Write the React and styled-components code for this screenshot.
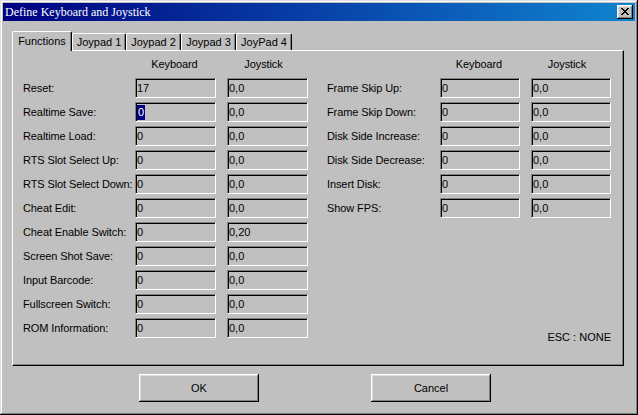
import React from "react";
import styled, { createGlobalStyle } from "styled-components";

const GlobalStyle = createGlobalStyle`
  html, body {
    margin: 0;
    padding: 0;
    background: #c0c0c0;
  }
  body {
    font-family: "Liberation Sans", Arial, sans-serif;
    font-size: 11px;
    color: #000;
  }
`;

const Window = styled.div`
  width: 638px;
  height: 415px;
  box-sizing: border-box;
  padding: 3px;
  background: #c0c0c0;
  box-shadow: inset -1px -1px #000, inset 1px 1px #dfdfdf,
    inset -2px -2px #808080, inset 2px 2px #fff;
  display: flex;
  flex-direction: column;
`;

const TitleBar = styled.div`
  height: 18px;
  display: flex;
  align-items: center;
  justify-content: space-between;
  padding: 0 2px;
  background: linear-gradient(to right, #000080, #1084d0);
`;

const TitleText = styled.span`
  font-family: "Liberation Serif", "Times New Roman", serif;
  font-size: 12px;
  line-height: 18px;
  color: #fff;
`;

const CloseButton = styled.div`
  width: 16px;
  height: 14px;
  box-sizing: border-box;
  background: #c0c0c0;
  box-shadow: inset -1px -1px #000, inset 1px 1px #fff,
    inset -2px -2px #808080, inset 2px 2px #dfdfdf;
  display: flex;
  align-items: center;
  justify-content: center;
  padding-bottom: 1px;
`;

const Body = styled.div`
  flex: 1;
  display: flex;
  flex-direction: column;
  padding: 10px 0 0 9px;
`;

const TabRow = styled.div`
  display: flex;
  align-items: flex-end;
  height: 19px;
`;

const Tab = styled.div`
  box-sizing: border-box;
  width: ${(p) => p.$w}px;
  height: ${(p) => (p.$active ? 20 : 17)}px;
  margin-bottom: ${(p) => (p.$active ? -1 : 0)}px;
  padding-bottom: ${(p) => (p.$active ? 1 : 0)}px;
  position: relative;
  z-index: ${(p) => (p.$active ? 2 : 1)};
  background: #c0c0c0;
  border-top: 1px solid #fff;
  border-left: 1px solid #fff;
  border-right: 1px solid #000;
  border-radius: 2px 2px 0 0;
  box-shadow: inset -1px 0 #808080;
  display: flex;
  align-items: center;
  justify-content: center;
  font-size: 11px;
  white-space: nowrap;
`;

const Panel = styled.div`
  box-sizing: border-box;
  width: 612px;
  height: 316px;
  border-top: 1px solid #fff;
  border-left: 1px solid #fff;
  border-right: 1px solid #000;
  border-bottom: 1px solid #000;
  box-shadow: inset -1px -1px #808080;
  padding: 3px 0 21px 10px;
  display: flex;
  gap: 19px;
`;

const Column = styled.div`
  display: flex;
  flex-direction: column;
`;

const Grid = styled.div`
  display: grid;
  grid-template-columns: ${(p) => p.$cols};
  grid-auto-rows: 20px;
  column-gap: 11px;
  row-gap: 4px;
  align-items: center;
`;

const Header = styled.div`
  text-align: center;
  padding-right: ${(p) => p.$shift || 0}px;
  letter-spacing: -0.1px;
`;

const Label = styled.div`
  white-space: nowrap;
  letter-spacing: -0.1px;
`;

const Field = styled.div`
  box-sizing: border-box;
  height: 20px;
  border-top: 1px solid #808080;
  border-left: 1px solid #808080;
  border-right: 1px solid #fff;
  border-bottom: 1px solid #fff;
  box-shadow: inset 1px 1px #000;
  padding-left: 1px;
  display: flex;
  align-items: center;
  padding-top: 1px;
  line-height: 15px;
`;

const Selected = styled.span`
  display: inline-block;
  background: #000080;
  color: #fff;
  padding: 0 1px;
  line-height: 15px;
`;

const EscNote = styled.div`
  margin-top: auto;
  text-align: right;
  line-height: 14px;
  font-size: 11px;
`;

const ButtonRow = styled.div`
  display: flex;
  gap: 112px;
  margin-top: 8px;
  padding-left: 127px;
`;

const Button = styled.div`
  box-sizing: border-box;
  width: 120px;
  height: 28px;
  background: #c0c0c0;
  box-shadow: inset -1px -1px #000, inset 1px 1px #fff,
    inset -2px -2px #808080, inset 2px 2px #dfdfdf;
  display: flex;
  align-items: center;
  justify-content: center;
  font-size: 11px;
`;

const leftRows = [
  ["Reset:", "17", "0,0"],
  ["Realtime Save:", "0", "0,0", true],
  ["Realtime Load:", "0", "0,0"],
  ["RTS Slot Select Up:", "0", "0,0"],
  ["RTS Slot Select Down:", "0", "0,0"],
  ["Cheat Edit:", "0", "0,0"],
  ["Cheat Enable Switch:", "0", "0,20"],
  ["Screen Shot Save:", "0", "0,0"],
  ["Input Barcode:", "0", "0,0"],
  ["Fullscreen Switch:", "0", "0,0"],
  ["ROM Information:", "0", "0,0"],
];

const rightRows = [
  ["Frame Skip Up:", "0", "0,0"],
  ["Frame Skip Down:", "0", "0,0"],
  ["Disk Side Increase:", "0", "0,0"],
  ["Disk Side Decrease:", "0", "0,0"],
  ["Insert Disk:", "0", "0,0"],
  ["Show FPS:", "0", "0,0"],
];

const tabs = [
  ["Functions", 60],
  ["Joypad 1", 54],
  ["Joypad 2", 55],
  ["Joypad 3", 55],
  ["JoyPad 4", 56],
];

function KeyGrid({ rows, cols }) {
  return (
    <Grid $cols={cols}>
      <div />
      <Header $shift={2}>Keyboard</Header>
      <Header $shift={8}>Joystick</Header>
      {rows.map(([label, key, joy, sel]) => (
        <React.Fragment key={label}>
          <Label>{label}</Label>
          <Field>{sel ? <Selected>{key}</Selected> : key}</Field>
          <Field>{joy}</Field>
        </React.Fragment>
      ))}
    </Grid>
  );
}

export default function App() {
  return (
    <>
      <GlobalStyle />
      <Window>
        <TitleBar>
          <TitleText>Define Keyboard and Joystick</TitleText>
          <CloseButton>
            <svg width="8" height="7" viewBox="0 0 8 7" shapeRendering="crispEdges">
              <path
                fill="#000"
                d="M0 0h2v1H0z M6 0h2v1H6z M1 1h2v1H1z M5 1h2v1H5z M2 2h4v1H2z M3 3h2v1H3z M2 4h4v1H2z M1 5h2v1H1z M5 5h2v1H5z M0 6h2v1H0z M6 6h2v1H6z"
              />
            </svg>
          </CloseButton>
        </TitleBar>
        <Body>
          <TabRow>
            {tabs.map(([name, w], i) => (
              <Tab key={name} $w={w} $active={i === 0}>
                {name}
              </Tab>
            ))}
          </TabRow>
          <Panel>
            <Column>
              <KeyGrid rows={leftRows} cols="101px 81px 81px" />
            </Column>
            <Column>
              <KeyGrid rows={rightRows} cols="102px 80px 80px" />
              <EscNote>ESC : NONE</EscNote>
            </Column>
          </Panel>
          <ButtonRow>
            <Button>OK</Button>
            <Button>Cancel</Button>
          </ButtonRow>
        </Body>
      </Window>
    </>
  );
}
